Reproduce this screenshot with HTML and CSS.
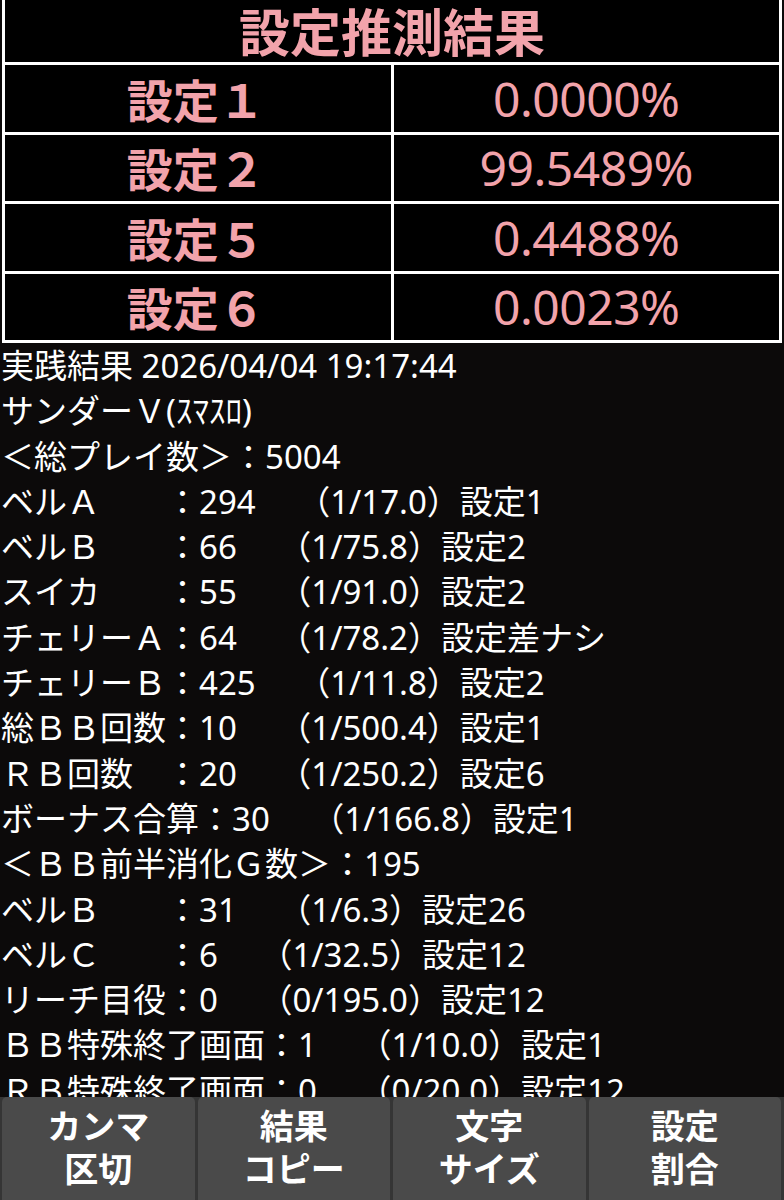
FILE: index.html
```html
<!DOCTYPE html>
<html lang="ja">
<head>
<meta charset="utf-8">
<link rel="stylesheet" href="styles.css">
</head>
<body>
<div class="screen">
  <div class="content">
    <div class="result">
      <div class="title">設定推測結果</div>
      <div class="label">設定１</div><div class="value">0.0000%</div>
      <div class="label">設定２</div><div class="value">99.5489%</div>
      <div class="label">設定５</div><div class="value">0.4488%</div>
      <div class="label">設定６</div><div class="value">0.0023%</div>
    </div>
    <div class="log">
      <div class="line">実践結果 2026/04/04 19:17:44</div>
      <div class="line">サンダーＶ(ｽﾏｽﾛ)</div>
      <div class="line">＜総プレイ数＞：5004</div>
      <div class="line">ベルＡ　　：294　 （1/17.0）設定1</div>
      <div class="line">ベルＢ　　：66　 （1/75.8）設定2</div>
      <div class="line">スイカ　　：55　 （1/91.0）設定2</div>
      <div class="line">チェリーＡ：64　 （1/78.2）設定差ナシ</div>
      <div class="line">チェリーＢ：425　 （1/11.8）設定2</div>
      <div class="line">総ＢＢ回数：10　 （1/500.4）設定1</div>
      <div class="line">ＲＢ回数　：20　 （1/250.2）設定6</div>
      <div class="line">ボーナス合算：30　 （1/166.8）設定1</div>
      <div class="line">＜ＢＢ前半消化Ｇ数＞：195</div>
      <div class="line">ベルＢ　　：31　 （1/6.3）設定26</div>
      <div class="line">ベルＣ　　：6　 （1/32.5）設定12</div>
      <div class="line">リーチ目役：0　 （0/195.0）設定12</div>
      <div class="line">ＢＢ特殊終了画面：1　 （1/10.0）設定1</div>
      <div class="line">ＲＢ特殊終了画面：0　 （0/20.0）設定12</div>
    </div>
  </div>
  <div class="bar">
    <div class="btn"><span>カンマ</span><span>区切</span></div>
    <div class="btn"><span>結果</span><span>コピー</span></div>
    <div class="btn"><span>文字</span><span>サイズ</span></div>
    <div class="btn"><span>設定</span><span>割合</span></div>
  </div>
</div>
</body>
</html>
```

FILE: styles.css
```css
html, body {
  margin: 0;
  padding: 0;
  background: #0c0a0a;
}
.screen {
  width: 784px;
  height: 1200px;
  display: flex;
  flex-direction: column;
  overflow: hidden;
  font-family: "Noto Sans", "Noto Sans CJK JP", sans-serif;
}
.content {
  height: 1097px;
  overflow: hidden;
  flex: none;
}
.result {
  margin: 0 2px;
  background: #ffffff;
  padding: 0 3px 3px;
  display: grid;
  grid-template-columns: 1fr 1fr;
  grid-template-rows: 62px repeat(4, 66.5px);
  gap: 3px;
}
.result > div {
  background: #000;
  color: #f2a3ab;
  display: flex;
  align-items: center;
  justify-content: center;
  line-height: 1.15;
}
.title {
  grid-column: 1 / 3;
  font-family: "Noto Sans CJK JP", sans-serif;
  font-weight: 700;
  font-size: 51px;
  padding-bottom: 2px;
}
.label {
  font-family: "Noto Sans CJK JP", sans-serif;
  font-weight: 700;
  font-size: 46px;
  padding-right: 4px;
}
.value {
  font-family: "Noto Sans", sans-serif;
  font-size: 48px;
  letter-spacing: -0.5px;
}
.log {
  color: #fff;
  font-size: 33px;
}
.line {
  height: 45.3px;
  line-height: 45.3px;
  white-space: pre;
  padding-left: 1px;
}
.bar {
  flex: 1;
  background: #353535;
  display: flex;
  gap: 3px;
  padding: 0 3px 0 2px;
}
.btn {
  flex: 1;
  background: #4a4a4a;
  border-radius: 5px 5px 0 0;
  color: #fff;
  font-family: "Noto Sans CJK JP", sans-serif;
  font-weight: 700;
  font-size: 34px;
  text-align: center;
  padding-top: 8px;
  display: flex;
  flex-direction: column;
  align-items: center;
  gap: 3px;
}
.btn span {
  display: block;
  line-height: 40px;
}
```
